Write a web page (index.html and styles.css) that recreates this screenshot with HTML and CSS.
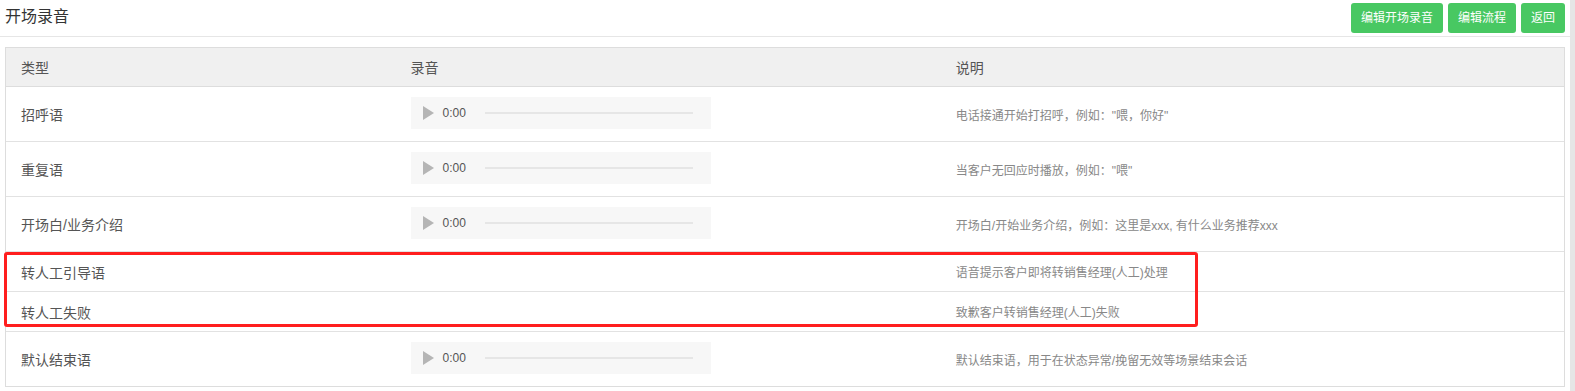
FILE: index.html
```html
<!DOCTYPE html>
<html lang="zh-CN">
<head>
<meta charset="utf-8">
<title>开场录音</title>
<link rel="stylesheet" href="styles.css">
</head>
<body>
<div class="shell">
  <div class="page">
    <div class="topbar">
      <h1 class="title">开场录音</h1>
      <div class="actions">
        <button class="btn">编辑开场录音</button>
        <button class="btn">编辑流程</button>
        <button class="btn">返回</button>
      </div>
    </div>
    <div class="table">
      <div class="row head">
        <div class="cell">类型</div>
        <div class="cell">录音</div>
        <div class="cell">说明</div>
      </div>
      <div class="row tall first">
        <div class="cell name">招呼语</div>
        <div class="cell"><div class="audio"><span class="play"></span><span class="time">0:00</span><span class="track"></span></div></div>
        <div class="cell desc">电话接通开始打招呼，例如："喂，你好"</div>
      </div>
      <div class="row tall">
        <div class="cell name">重复语</div>
        <div class="cell"><div class="audio"><span class="play"></span><span class="time">0:00</span><span class="track"></span></div></div>
        <div class="cell desc">当客户无回应时播放，例如："喂"</div>
      </div>
      <div class="row tall">
        <div class="cell name">开场白/业务介绍</div>
        <div class="cell"><div class="audio"><span class="play"></span><span class="time">0:00</span><span class="track"></span></div></div>
        <div class="cell desc">开场白/开始业务介绍，例如：这里是xxx, 有什么业务推荐xxx</div>
      </div>
      <div class="row short">
        <div class="cell name">转人工引导语</div>
        <div class="cell"></div>
        <div class="cell desc">语音提示客户即将转销售经理(人工)处理</div>
      </div>
      <div class="row short">
        <div class="cell name">转人工失败</div>
        <div class="cell"></div>
        <div class="cell desc">致歉客户转销售经理(人工)失败</div>
      </div>
      <div class="row tall">
        <div class="cell name">默认结束语</div>
        <div class="cell"><div class="audio"><span class="play"></span><span class="time">0:00</span><span class="track"></span></div></div>
        <div class="cell desc">默认结束语，用于在状态异常/挽留无效等场景结束会话</div>
      </div>
    </div>
    <div class="highlight"></div>
  </div>
  <div class="scrollbar"></div>
</div>
</body>
</html>
```

FILE: styles.css
```css
* { box-sizing: border-box; }

html, body {
  margin: 0;
  padding: 0;
  background: #fff;
}

body {
  font-family: "Liberation Sans", "Noto Sans CJK SC", sans-serif;
  color: #555;
  overflow: hidden;
}

.shell {
  display: flex;
  height: 391px;
}

.page {
  position: relative;
  width: 1570px;
  flex: none;
}

.scrollbar {
  width: 5px;
  flex: none;
  background: #e6e6e6;
}

.topbar {
  height: 37px;
  padding: 0 5px;
  display: flex;
  align-items: flex-start;
  justify-content: space-between;
  border-bottom: 1px solid #e6e6e6;
}

.title {
  margin: 0;
  padding-top: 7px;
  font-size: 16px;
  font-weight: normal;
  color: #333;
  line-height: 20px;
}

.actions {
  display: flex;
  gap: 5px;
  padding-top: 3px;
}

.btn {
  height: 30px;
  padding: 0 10px;
  border: none;
  border-radius: 3px;
  background: #48c862;
  color: #fff;
  font-family: inherit;
  font-size: 12px;
  line-height: 30px;
  cursor: pointer;
}

.table {
  margin: 10px 5px 0;
  border: 1px solid #dddddd;
}

.row {
  display: grid;
  grid-template-columns: 25% 35% 40%;
  align-items: center;
  border-top: 1px solid #e2e2e2;
}

.row.head {
  height: 39px;
  border-top: none;
  border-bottom: 1px solid #dddddd;
  background: #f0f0f0;
  font-size: 14px;
  color: #555;
}

.row.head + .row { border-top: none; }

.row.first { height: 54px; }
.row.tall { height: 55px; }
.row.first.tall { height: 54px; }
.row.short { height: 40px; }

.cell {
  padding: 0 15px;
  white-space: nowrap;
}

.name {
  font-size: 14px;
  color: #555;
  padding-top: 0;
}

.desc {
  font-size: 12px;
  color: #888;
}

.audio {
  width: 300px;
  height: 32px;
  margin-bottom: 3px;
  background: #f7f7f7;
  display: flex;
  align-items: center;
  padding: 0 18px 0 12px;
}

.play {
  width: 0;
  height: 0;
  border-top: 7px solid transparent;
  border-bottom: 7px solid transparent;
  border-left: 11px solid #b5b5b5;
  flex: none;
}

.time {
  margin-left: 9px;
  font-size: 12px;
  color: #555;
  width: 42px;
  flex: none;
}

.track {
  flex: 1;
  height: 2px;
  background: #e6e6e6;
}

.highlight {
  position: absolute;
  left: 4px;
  top: 252px;
  width: 1194px;
  height: 75px;
  border: 3px solid #ff1e1e;
  border-radius: 3px;
  pointer-events: none;
}
```
